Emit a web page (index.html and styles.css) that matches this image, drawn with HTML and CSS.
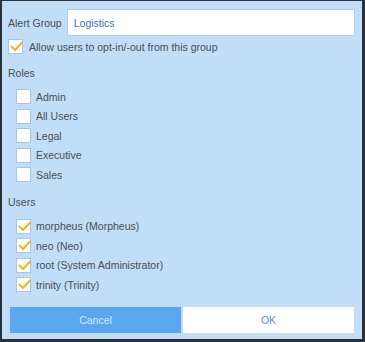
FILE: index.html
```html
<!DOCTYPE html>
<html>
<head>
<meta charset="utf-8">
<link rel="stylesheet" href="styles.css">
</head>
<body>
<div class="panel">
  <div class="group-row">
    <span class="label">Alert Group</span>
    <div class="input">Logistics</div>
  </div>
  <div class="check-row opt-row">
    <span class="box checked"><svg viewBox="0 0 15 15"><polyline points="2.5,7.5 6,11 13,3.5"/></svg></span>
    <span>Allow users to opt-in/-out from this group</span>
  </div>

  <div class="section-label roles-label">Roles</div>
  <div class="list roles">
    <div class="check-row"><span class="box"></span><span>Admin</span></div>
    <div class="check-row"><span class="box"></span><span>All Users</span></div>
    <div class="check-row"><span class="box"></span><span>Legal</span></div>
    <div class="check-row"><span class="box"></span><span>Executive</span></div>
    <div class="check-row"><span class="box"></span><span>Sales</span></div>
  </div>

  <div class="section-label users-label">Users</div>
  <div class="list users">
    <div class="check-row"><span class="box checked"><svg viewBox="0 0 15 15"><polyline points="2.5,7.5 6,11 13,3.5"/></svg></span><span>morpheus (Morpheus)</span></div>
    <div class="check-row"><span class="box checked"><svg viewBox="0 0 15 15"><polyline points="2.5,7.5 6,11 13,3.5"/></svg></span><span>neo (Neo)</span></div>
    <div class="check-row"><span class="box checked"><svg viewBox="0 0 15 15"><polyline points="2.5,7.5 6,11 13,3.5"/></svg></span><span>root (System Administrator)</span></div>
    <div class="check-row"><span class="box checked"><svg viewBox="0 0 15 15"><polyline points="2.5,7.5 6,11 13,3.5"/></svg></span><span>trinity (Trinity)</span></div>
  </div>

  <div class="buttons">
    <div class="btn cancel">Cancel</div>
    <div class="btn ok">OK</div>
  </div>
</div>
</body>
</html>
```

FILE: styles.css
```css
html, body {
  margin: 0;
  padding: 0;
  width: 365px;
  height: 342px;
  background: #2a313b;
  overflow: hidden;
}
.panel {
  box-sizing: border-box;
  width: 365px;
  height: 342px;
  border-style: solid;
  border-color: #2a313b;
  border-width: 1px 3px 3px 2px;
  background: #c1ddf8;
  padding: 8px 8px 0 6px;
  font-family: "Liberation Sans", Arial, sans-serif;
  font-size: 10.5px;
  color: #4a4e53;
  display: flex;
  flex-direction: column;
}
.group-row {
  display: flex;
  align-items: center;
  height: 27px;
}
.label {
  margin-right: 5px;
}
.input {
  flex: 1;
  box-sizing: border-box;
  height: 27px;
  background: #ffffff;
  border: 1px solid #a9cff2;
  color: #3e6fc6;
  padding-left: 6px;
  display: flex;
  align-items: center;
  margin-right: -1px;
}
.check-row {
  display: flex;
  align-items: center;
  height: 19.5px;
}
.opt-row {
  margin-top: 1px;
}
.box {
  box-sizing: border-box;
  width: 15px;
  height: 15px;
  background: #ffffff;
  border: 1px solid #9ec6ee;
  margin-right: 6px;
  flex: none;
  display: block;
  position: relative;
}
.list .box {
  margin-right: 5px;
}
.box svg {
  position: absolute;
  left: 0;
  top: -1px;
  width: 15px;
  height: 15px;
  overflow: visible;
}
.box polyline {
  fill: none;
  stroke: #f2b318;
  stroke-width: 2;
  stroke-linecap: round;
  stroke-linejoin: round;
}
.section-label {
  height: 19.5px;
  line-height: 19.5px;
}
.roles-label {
  margin-top: 7.75px;
}
.users-label {
  margin-top: 8.5px;
}
.list {
  padding-left: 8px;
}
.roles {
  margin-top: 3px;
}
.users {
  margin-top: 4px;
}
.buttons {
  display: flex;
  gap: 2px;
  margin-top: 12.75px;
  margin-left: 2px;
}
.btn {
  flex: 1;
  height: 26px;
  display: flex;
  align-items: center;
  justify-content: center;
}
.cancel {
  background: #5aa6f1;
  color: #d7e9fc;
}
.ok {
  background: #ffffff;
  color: #5b8dd8;
}
```
